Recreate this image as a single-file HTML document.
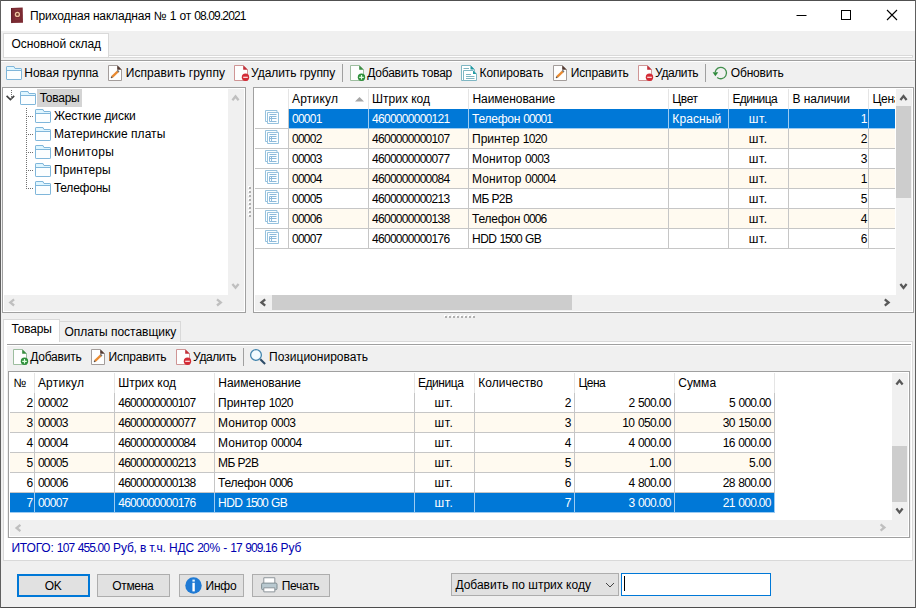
<!DOCTYPE html>
<html lang="ru"><head><meta charset="utf-8"><title>Приходная накладная № 1 от 08.09.2021</title>
<style>
html,body{margin:0;padding:0;background:#f0f0f0;overflow:hidden}
#w{position:relative;width:916px;height:608px;overflow:hidden;font-family:"Liberation Sans", sans-serif;font-size:12px}
#w div,#w svg{position:absolute}
.t{white-space:nowrap;line-height:16px;height:16px}
.d{font-size:12px;letter-spacing:-0.7px;word-spacing:0.9px;margin-right:0.7px}
.i{display:block}
.i svg{position:static!important;display:block}
</style></head><body><div id="w">
<div style="left:0px;top:0px;width:916px;height:608px;background:#f0f0f0;"></div>
<div style="left:1px;top:1px;width:914px;height:30px;background:#fff;"></div>
<div style="left:0px;top:0px;width:916px;height:1px;background:#505050;"></div>
<div style="left:0px;top:607px;width:916px;height:1px;background:#4c4c4c;"></div>
<div style="left:0px;top:0px;width:1px;height:608px;background:#606060;"></div>
<div style="left:915px;top:0px;width:1px;height:608px;background:#606060;"></div>
<div class="i" style="left:10px;top:7px"><svg width="14" height="17" viewBox="0 0 14 17"><path d="M1 1.1L12.7 0.5L13 15.8L1.3 16.1Z" fill="#7b2a32"/><path d="M1.5 1.1L1.8 16.1" stroke="#5e1d24" stroke-width="1"/><circle cx="7.4" cy="7.4" r="2.0" fill="#7a3a2a" stroke="#eec4a0" stroke-width="1.3"/><path d="M4.5 2.8h6M5 12h5" stroke="#9a4a48" stroke-width="0.6"/></svg></div>
<div class="t" style="top:8px;font-size:12px;color:#000;letter-spacing:-0.16px;left:30.1px;">Приходная накладная № <span class="d" style="letter-spacing:-0.86px">1</span> от <span class="d" style="letter-spacing:-0.86px">08.09.2021</span></div>
<svg class="i" style="left:790px;top:4px" width="120" height="24" viewBox="0 0 120 24"><path d="M6.5 11.5h10" stroke="#000" stroke-width="1" fill="none"/><rect x="51.5" y="6.5" width="9" height="9" stroke="#000" stroke-width="1" fill="none"/><path d="M97 6l10 10M107 6l-10 10" stroke="#000" stroke-width="1.1" fill="none"/></svg>
<div style="left:3px;top:55px;width:910px;height:3px;background:#fff;border:1px solid #d9d9d9;box-sizing:border-box;"></div>
<div style="left:3px;top:33px;width:106px;height:24px;background:#fff;border:1px solid #d9d9d9;border-bottom:none;box-sizing:border-box;"></div>
<div class="t" style="top:36px;font-size:12px;color:#000;letter-spacing:-0.07px;left:11.6px;">Основной склад</div>
<div style="left:1px;top:60px;width:914px;height:1px;background:#a0a0a0;"></div>
<div style="left:1px;top:61px;width:914px;height:1px;background:#fff;"></div>
<div class="i" style="left:6px;top:66px"><svg width="16" height="14" viewBox="0 0 16 14"><path d="M1.5 0.5h6.3l1.2 2h5.5q1 0 1 1v9q0 1-1 1h-13q-1 0-1-1v-11q0-1 1-1z" fill="#fbfeff" stroke="#7fb6da" stroke-width="1"/><path d="M1 1h7l1 2h6v1.5h-14z" fill="#dff6ff"/><path d="M0.5 4.5h15" stroke="#7fb6da" stroke-width="1"/><path d="M1.5 0.5h6.3l1.2 2h5.5q1 0 1 1v9q0 1-1 1h-13q-1 0-1-1v-11q0-1 1-1z" fill="none" stroke="#7fb6da" stroke-width="1"/></svg></div>
<div class="t" style="top:65px;font-size:12px;color:#000;letter-spacing:-0.04px;left:24.3px;">Новая группа</div>
<div class="i" style="left:108px;top:65px"><svg width="15" height="16" viewBox="0 0 15 16"><path d="M0.5 0.5h9l4 4v11h-13z" fill="#fefefe" stroke="#a39d9b" stroke-width="1"/><path d="M9.2 0.4l4.5 4.4h-4.5z" fill="#543a32"/><path d="M4.1 11.9L9.9 6.4" stroke="#e98a30" stroke-width="2.3"/><path d="M9.6 6.7l1.1-1.05" stroke="#727272" stroke-width="2.3"/><path d="M3.1 12.9l1.3-0.5l-0.8-0.8z" fill="#3a2a20" stroke="#3a2a20" stroke-width="0.5"/></svg></div>
<div class="t" style="top:65px;font-size:12px;color:#000;letter-spacing:0.04px;left:125.8px;">Исправить группу</div>
<div class="i" style="left:234px;top:65px"><svg width="16" height="17" viewBox="0 0 16 17"><path d="M0.5 0.5h9l4 4v11h-13z" fill="#fefefe" stroke="#cf9595" stroke-width="1"/><path d="M9.2 0.4l4.5 4.4h-4.5z" fill="#c2303a"/><circle cx="11.5" cy="12.3" r="3.7" fill="#d32b36"/><path d="M9.2 12.3h4.6" stroke="#ffe9e9" stroke-width="1.2"/></svg></div>
<div class="t" style="top:65px;font-size:12px;color:#000;letter-spacing:-0.07px;left:251.1px;">Удалить группу</div>
<div style="left:342px;top:64px;width:1px;height:18px;background:#a0a0a0;"></div>
<div class="i" style="left:350px;top:65px"><svg width="16" height="17" viewBox="0 0 16 17"><path d="M0.5 0.5h9l4 4v11h-13z" fill="#fefefe" stroke="#9dbd9f" stroke-width="1"/><path d="M9.2 0.4l4.5 4.4h-4.5z" fill="#3a8d42"/><circle cx="11.5" cy="12.3" r="3.7" fill="#2f8f3c"/><path d="M9.2 12.3h4.6M11.5 10v4.6" stroke="#dfffdf" stroke-width="1.2"/></svg></div>
<div class="t" style="top:65px;font-size:12px;color:#000;letter-spacing:-0.23px;left:367.3px;">Добавить товар</div>
<div class="i" style="left:461px;top:65px"><svg width="17" height="16" viewBox="0 0 17 16"><path d="M0.5 0.5h9l4 4v11h-13z" fill="#fff" stroke="#7fb6c3" stroke-width="1"/><path d="M9.5 0.5l4 4h-4z" fill="#1f9aa2"/><path d="M2.5 3.5h5.5" stroke="#7fb4c0" stroke-width="1"/><path d="M2.5 5.5h9.5l3.5 3.5v6.5h-13z" fill="#fff" stroke="#7fb6c3" stroke-width="1"/><path d="M12 5.5l3.5 3.5h-3.5z" fill="#1f9aa2"/><path d="M5 9.5h5M5 11.5h8.5M5 13.5h8.5" stroke="#7fb4c0" stroke-width="1"/></svg></div>
<div class="t" style="top:65px;font-size:12px;color:#000;letter-spacing:-0.07px;left:479.6px;">Копировать</div>
<div class="i" style="left:553px;top:65px"><svg width="15" height="16" viewBox="0 0 15 16"><path d="M0.5 0.5h9l4 4v11h-13z" fill="#fefefe" stroke="#a39d9b" stroke-width="1"/><path d="M9.2 0.4l4.5 4.4h-4.5z" fill="#543a32"/><path d="M4.1 11.9L9.9 6.4" stroke="#e98a30" stroke-width="2.3"/><path d="M9.6 6.7l1.1-1.05" stroke="#727272" stroke-width="2.3"/><path d="M3.1 12.9l1.3-0.5l-0.8-0.8z" fill="#3a2a20" stroke="#3a2a20" stroke-width="0.5"/></svg></div>
<div class="t" style="top:65px;font-size:12px;color:#000;letter-spacing:-0.17px;left:570.8px;">Исправить</div>
<div class="i" style="left:638px;top:65px"><svg width="16" height="17" viewBox="0 0 16 17"><path d="M0.5 0.5h9l4 4v11h-13z" fill="#fefefe" stroke="#cf9595" stroke-width="1"/><path d="M9.2 0.4l4.5 4.4h-4.5z" fill="#c2303a"/><circle cx="11.5" cy="12.3" r="3.7" fill="#d32b36"/><path d="M9.2 12.3h4.6" stroke="#ffe9e9" stroke-width="1.2"/></svg></div>
<div class="t" style="top:65px;font-size:12px;color:#000;letter-spacing:-0.4px;left:655.1px;">Удалить</div>
<div style="left:705px;top:64px;width:1px;height:18px;background:#a0a0a0;"></div>
<div class="i" style="left:712px;top:65px"><svg width="16" height="16" viewBox="0 0 16 16"><path d="M3.2 7.2A5.7 5.7 0 1 1 5.2 12.4" fill="none" stroke="#418f4c" stroke-width="1.3"/><path d="M0.6 7.2h5.6l-2.8 4z" fill="#2e8a3c"/></svg></div>
<div class="t" style="top:65px;font-size:12px;color:#000;letter-spacing:-0.18px;left:730.8px;">Обновить</div>
<div style="left:2px;top:87px;width:244px;height:226px;background:#fff;border:1px solid #a0a0a0;box-sizing:border-box;"></div>
<div style="left:228px;top:89px;width:16px;height:222px;background:#f0f0f0;"></div>
<div style="left:4px;top:295px;width:240px;height:16px;background:#f0f0f0;"></div>
<div style="left:37px;top:89px;width:45px;height:18px;background:#d4d4d4;"></div>
<div class="i" style="left:5px;top:94px"><svg width="11" height="8" viewBox="0 0 11 8"><path d="M1.6 1.9L5.4 5.6L9.2 1.9" stroke="#404040" stroke-width="1.6" fill="none"/></svg></div>
<div class="i" style="left:20px;top:91px"><svg width="16" height="14" viewBox="0 0 16 14"><path d="M1.5 0.5h6.3l1.2 2h5.5q1 0 1 1v9q0 1-1 1h-13q-1 0-1-1v-11q0-1 1-1z" fill="#fbfeff" stroke="#7fb6da" stroke-width="1"/><path d="M1 1h7l1 2h6v1.5h-14z" fill="#dff6ff"/><path d="M0.5 4.5h15" stroke="#7fb6da" stroke-width="1"/><path d="M1.5 0.5h6.3l1.2 2h5.5q1 0 1 1v9q0 1-1 1h-13q-1 0-1-1v-11q0-1 1-1z" fill="none" stroke="#7fb6da" stroke-width="1"/></svg></div>
<div class="t" style="top:90px;font-size:12px;color:#000;letter-spacing:-0.26px;left:39.7px;">Товары</div>
<div class="i" style="left:35px;top:109px"><svg width="16" height="14" viewBox="0 0 16 14"><path d="M1.5 0.5h6.3l1.2 2h5.5q1 0 1 1v9q0 1-1 1h-13q-1 0-1-1v-11q0-1 1-1z" fill="#fbfeff" stroke="#7fb6da" stroke-width="1"/><path d="M1 1h7l1 2h6v1.5h-14z" fill="#dff6ff"/><path d="M0.5 4.5h15" stroke="#7fb6da" stroke-width="1"/><path d="M1.5 0.5h6.3l1.2 2h5.5q1 0 1 1v9q0 1-1 1h-13q-1 0-1-1v-11q0-1 1-1z" fill="none" stroke="#7fb6da" stroke-width="1"/></svg></div>
<div class="t" style="top:108px;font-size:12px;color:#000;letter-spacing:-0.07px;left:53.9px;">Жесткие диски</div>
<div class="i" style="left:35px;top:127px"><svg width="16" height="14" viewBox="0 0 16 14"><path d="M1.5 0.5h6.3l1.2 2h5.5q1 0 1 1v9q0 1-1 1h-13q-1 0-1-1v-11q0-1 1-1z" fill="#fbfeff" stroke="#7fb6da" stroke-width="1"/><path d="M1 1h7l1 2h6v1.5h-14z" fill="#dff6ff"/><path d="M0.5 4.5h15" stroke="#7fb6da" stroke-width="1"/><path d="M1.5 0.5h6.3l1.2 2h5.5q1 0 1 1v9q0 1-1 1h-13q-1 0-1-1v-11q0-1 1-1z" fill="none" stroke="#7fb6da" stroke-width="1"/></svg></div>
<div class="t" style="top:126px;font-size:12px;color:#000;letter-spacing:0.05px;left:53.9px;">Материнские платы</div>
<div class="i" style="left:35px;top:145px"><svg width="16" height="14" viewBox="0 0 16 14"><path d="M1.5 0.5h6.3l1.2 2h5.5q1 0 1 1v9q0 1-1 1h-13q-1 0-1-1v-11q0-1 1-1z" fill="#fbfeff" stroke="#7fb6da" stroke-width="1"/><path d="M1 1h7l1 2h6v1.5h-14z" fill="#dff6ff"/><path d="M0.5 4.5h15" stroke="#7fb6da" stroke-width="1"/><path d="M1.5 0.5h6.3l1.2 2h5.5q1 0 1 1v9q0 1-1 1h-13q-1 0-1-1v-11q0-1 1-1z" fill="none" stroke="#7fb6da" stroke-width="1"/></svg></div>
<div class="t" style="top:144px;font-size:12px;color:#000;letter-spacing:0.36px;left:53.9px;">Мониторы</div>
<div class="i" style="left:35px;top:163px"><svg width="16" height="14" viewBox="0 0 16 14"><path d="M1.5 0.5h6.3l1.2 2h5.5q1 0 1 1v9q0 1-1 1h-13q-1 0-1-1v-11q0-1 1-1z" fill="#fbfeff" stroke="#7fb6da" stroke-width="1"/><path d="M1 1h7l1 2h6v1.5h-14z" fill="#dff6ff"/><path d="M0.5 4.5h15" stroke="#7fb6da" stroke-width="1"/><path d="M1.5 0.5h6.3l1.2 2h5.5q1 0 1 1v9q0 1-1 1h-13q-1 0-1-1v-11q0-1 1-1z" fill="none" stroke="#7fb6da" stroke-width="1"/></svg></div>
<div class="t" style="top:162px;font-size:12px;color:#000;letter-spacing:0.12px;left:53.9px;">Принтеры</div>
<div class="i" style="left:35px;top:181px"><svg width="16" height="14" viewBox="0 0 16 14"><path d="M1.5 0.5h6.3l1.2 2h5.5q1 0 1 1v9q0 1-1 1h-13q-1 0-1-1v-11q0-1 1-1z" fill="#fbfeff" stroke="#7fb6da" stroke-width="1"/><path d="M1 1h7l1 2h6v1.5h-14z" fill="#dff6ff"/><path d="M0.5 4.5h15" stroke="#7fb6da" stroke-width="1"/><path d="M1.5 0.5h6.3l1.2 2h5.5q1 0 1 1v9q0 1-1 1h-13q-1 0-1-1v-11q0-1 1-1z" fill="none" stroke="#7fb6da" stroke-width="1"/></svg></div>
<div class="t" style="top:180px;font-size:12px;color:#000;letter-spacing:-0.23px;left:53.9px;">Телефоны</div>
<svg class="i" style="left:0;top:0" width="60" height="200" viewBox="0 0 60 200"><g shape-rendering="crispEdges" stroke="#707070" stroke-width="1" stroke-dasharray="1 1" fill="none"><path d="M11.5 90V99"/><path d="M26.5 108V189"/><path d="M26 116.5H34"/><path d="M26 134.5H34"/><path d="M26 152.5H34"/><path d="M26 170.5H34"/><path d="M26 188.5H34"/></g></svg>
<div style="left:248px;top:186px;width:2px;height:2px;background:#fff;"></div>
<div style="left:249px;top:187px;width:2px;height:2px;background:#b0b0b0;"></div>
<div style="left:248px;top:190px;width:2px;height:2px;background:#fff;"></div>
<div style="left:249px;top:191px;width:2px;height:2px;background:#b0b0b0;"></div>
<div style="left:248px;top:194px;width:2px;height:2px;background:#fff;"></div>
<div style="left:249px;top:195px;width:2px;height:2px;background:#b0b0b0;"></div>
<div style="left:248px;top:198px;width:2px;height:2px;background:#fff;"></div>
<div style="left:249px;top:199px;width:2px;height:2px;background:#b0b0b0;"></div>
<div style="left:248px;top:202px;width:2px;height:2px;background:#fff;"></div>
<div style="left:249px;top:203px;width:2px;height:2px;background:#b0b0b0;"></div>
<div style="left:248px;top:206px;width:2px;height:2px;background:#fff;"></div>
<div style="left:249px;top:207px;width:2px;height:2px;background:#b0b0b0;"></div>
<div style="left:248px;top:210px;width:2px;height:2px;background:#fff;"></div>
<div style="left:249px;top:211px;width:2px;height:2px;background:#b0b0b0;"></div>
<div style="left:248px;top:214px;width:2px;height:2px;background:#fff;"></div>
<div style="left:249px;top:215px;width:2px;height:2px;background:#b0b0b0;"></div>
<div style="left:444px;top:315px;width:2px;height:2px;background:#fff;"></div>
<div style="left:445px;top:316px;width:2px;height:2px;background:#b0b0b0;"></div>
<div style="left:448px;top:315px;width:2px;height:2px;background:#fff;"></div>
<div style="left:449px;top:316px;width:2px;height:2px;background:#b0b0b0;"></div>
<div style="left:452px;top:315px;width:2px;height:2px;background:#fff;"></div>
<div style="left:453px;top:316px;width:2px;height:2px;background:#b0b0b0;"></div>
<div style="left:456px;top:315px;width:2px;height:2px;background:#fff;"></div>
<div style="left:457px;top:316px;width:2px;height:2px;background:#b0b0b0;"></div>
<div style="left:460px;top:315px;width:2px;height:2px;background:#fff;"></div>
<div style="left:461px;top:316px;width:2px;height:2px;background:#b0b0b0;"></div>
<div style="left:464px;top:315px;width:2px;height:2px;background:#fff;"></div>
<div style="left:465px;top:316px;width:2px;height:2px;background:#b0b0b0;"></div>
<div style="left:468px;top:315px;width:2px;height:2px;background:#fff;"></div>
<div style="left:469px;top:316px;width:2px;height:2px;background:#b0b0b0;"></div>
<div style="left:472px;top:315px;width:2px;height:2px;background:#fff;"></div>
<div style="left:473px;top:316px;width:2px;height:2px;background:#b0b0b0;"></div>
<div style="left:253px;top:87px;width:661px;height:226px;background:#fff;border:1px solid #a0a0a0;box-sizing:border-box;"></div>
<div style="left:896px;top:89px;width:16px;height:222px;background:#f0f0f0;"></div>
<div style="left:255px;top:295px;width:657px;height:16px;background:#f0f0f0;"></div>
<div style="left:896px;top:106px;width:15px;height:92px;background:#cdcdcd;"></div>
<div style="left:272px;top:295px;width:300px;height:15px;background:#cdcdcd;"></div>
<div style="left:288px;top:89px;width:1px;height:20px;background:#e5e5e5;"></div>
<div style="left:368px;top:89px;width:1px;height:20px;background:#e5e5e5;"></div>
<div style="left:468px;top:89px;width:1px;height:20px;background:#e5e5e5;"></div>
<div style="left:668px;top:89px;width:1px;height:20px;background:#e5e5e5;"></div>
<div style="left:728px;top:89px;width:1px;height:20px;background:#e5e5e5;"></div>
<div style="left:788px;top:89px;width:1px;height:20px;background:#e5e5e5;"></div>
<div style="left:868px;top:89px;width:1px;height:20px;background:#e5e5e5;"></div>
<div class="t" style="top:91px;font-size:12px;color:#000;letter-spacing:0.22px;left:292.0px;">Артикул</div>
<div class="t" style="top:91px;font-size:12px;color:#000;letter-spacing:-0.01px;left:372.1px;">Штрих код</div>
<div class="t" style="top:91px;font-size:12px;color:#000;letter-spacing:-0.04px;left:472.4px;">Наименование</div>
<div class="t" style="top:91px;font-size:12px;color:#000;letter-spacing:-0.36px;left:672.3px;">Цвет</div>
<div class="t" style="top:91px;font-size:12px;color:#000;letter-spacing:-0.53px;left:732.4px;">Единица</div>
<div class="t" style="top:91px;font-size:12px;color:#000;letter-spacing:-0.08px;left:792.5px;">В наличии</div>
<div style="left:868px;top:88px;width:27px;height:20px;overflow:hidden">
<div class="t" style="left:4.4px;top:3px;font-size:12px;letter-spacing:-0.25px">Цена</div></div>
<svg class="i" style="left:355px;top:96px" width="10" height="6" viewBox="0 0 10 6"><path d="M0 5.5L4.5 1L9 5.5Z" fill="#a6a6a6"/></svg>
<div style="left:289px;top:109px;width:606px;height:19px;background:#0078d7;"></div>
<div style="left:255px;top:128px;width:640px;height:1px;background:#c6c6c6;"></div>
<div style="left:288px;top:109px;width:1px;height:20px;background:#c6c6c6;"></div>
<div style="left:368px;top:109px;width:1px;height:20px;background:#c6c6c6;"></div>
<div style="left:468px;top:109px;width:1px;height:20px;background:#c6c6c6;"></div>
<div style="left:668px;top:109px;width:1px;height:20px;background:#c6c6c6;"></div>
<div style="left:728px;top:109px;width:1px;height:20px;background:#c6c6c6;"></div>
<div style="left:788px;top:109px;width:1px;height:20px;background:#c6c6c6;"></div>
<div style="left:868px;top:109px;width:1px;height:20px;background:#c6c6c6;"></div>
<div style="left:289px;top:128px;width:606px;height:1px;background:#9ccbf2;"></div>
<div style="left:368px;top:109px;width:1px;height:19px;background:#9ccbf2;"></div>
<div style="left:468px;top:109px;width:1px;height:19px;background:#9ccbf2;"></div>
<div style="left:668px;top:109px;width:1px;height:19px;background:#9ccbf2;"></div>
<div style="left:728px;top:109px;width:1px;height:19px;background:#9ccbf2;"></div>
<div style="left:788px;top:109px;width:1px;height:19px;background:#9ccbf2;"></div>
<div style="left:868px;top:109px;width:1px;height:19px;background:#9ccbf2;"></div>
<div class="i" style="left:265px;top:110px"><svg width="15" height="15" viewBox="0 0 15 15"><path d="M0.5 0.5h11.5v11h-11.5z" fill="#fbfeff" stroke="#97c2de" stroke-width="1"/><path d="M2.5 2.5h11v11h-11z" fill="#fbfeff" stroke="#97c2de" stroke-width="1"/><path d="M4.5 4.5h7M4.5 6.5h7M4.5 8.5h7M4.5 11.5h7M4.5 6.5v5M6.5 6.5v5" stroke="#8dbadb" stroke-width="1" fill="none"/></svg></div>
<div class="t" style="top:111px;font-size:12px;color:#fff;letter-spacing:-0.04px;left:292.0px;"><span class="d" style="letter-spacing:-0.74px">00001</span></div>
<div class="t" style="top:111px;font-size:12px;color:#fff;letter-spacing:-0.03px;left:372.1px;"><span class="d" style="letter-spacing:-0.73px">4600000000121</span></div>
<div class="t" style="top:111px;font-size:12px;color:#fff;letter-spacing:-0.23px;left:472.0px;">Телефон <span class="d" style="letter-spacing:-0.93px">00001</span></div>
<div class="t" style="top:111px;font-size:12px;color:#fff;letter-spacing:0.12px;left:672.3px;">Красный</div>
<div class="t" style="top:111px;font-size:12px;color:#fff;letter-spacing:0.58px;left:658.29px;width:200px;text-align:center;">шт.</div>
<div class="t" style="top:111px;font-size:12px;color:#fff;right:48.6px;text-align:right;"><span class="d">1</span></div>
<div style="left:289px;top:129px;width:606px;height:19px;background:#fffaf0;"></div>
<div style="left:255px;top:148px;width:640px;height:1px;background:#c6c6c6;"></div>
<div style="left:288px;top:129px;width:1px;height:20px;background:#c6c6c6;"></div>
<div style="left:368px;top:129px;width:1px;height:20px;background:#c6c6c6;"></div>
<div style="left:468px;top:129px;width:1px;height:20px;background:#c6c6c6;"></div>
<div style="left:668px;top:129px;width:1px;height:20px;background:#c6c6c6;"></div>
<div style="left:728px;top:129px;width:1px;height:20px;background:#c6c6c6;"></div>
<div style="left:788px;top:129px;width:1px;height:20px;background:#c6c6c6;"></div>
<div style="left:868px;top:129px;width:1px;height:20px;background:#c6c6c6;"></div>
<div class="i" style="left:265px;top:130px"><svg width="15" height="15" viewBox="0 0 15 15"><path d="M0.5 0.5h11.5v11h-11.5z" fill="#fbfeff" stroke="#97c2de" stroke-width="1"/><path d="M2.5 2.5h11v11h-11z" fill="#fbfeff" stroke="#97c2de" stroke-width="1"/><path d="M4.5 4.5h7M4.5 6.5h7M4.5 8.5h7M4.5 11.5h7M4.5 6.5v5M6.5 6.5v5" stroke="#8dbadb" stroke-width="1" fill="none"/></svg></div>
<div class="t" style="top:131px;font-size:12px;color:#000;letter-spacing:-0.04px;left:292.0px;"><span class="d" style="letter-spacing:-0.74px">00002</span></div>
<div class="t" style="top:131px;font-size:12px;color:#000;letter-spacing:-0.03px;left:372.1px;"><span class="d" style="letter-spacing:-0.73px">4600000000107</span></div>
<div class="t" style="top:131px;font-size:12px;color:#000;letter-spacing:0.01px;left:472.0px;">Принтер <span class="d" style="letter-spacing:-0.69px">1020</span></div>
<div class="t" style="top:131px;font-size:12px;color:#000;letter-spacing:0.58px;left:658.29px;width:200px;text-align:center;">шт.</div>
<div class="t" style="top:131px;font-size:12px;color:#000;right:48.6px;text-align:right;"><span class="d">2</span></div>
<div style="left:255px;top:168px;width:640px;height:1px;background:#c6c6c6;"></div>
<div style="left:288px;top:149px;width:1px;height:20px;background:#c6c6c6;"></div>
<div style="left:368px;top:149px;width:1px;height:20px;background:#c6c6c6;"></div>
<div style="left:468px;top:149px;width:1px;height:20px;background:#c6c6c6;"></div>
<div style="left:668px;top:149px;width:1px;height:20px;background:#c6c6c6;"></div>
<div style="left:728px;top:149px;width:1px;height:20px;background:#c6c6c6;"></div>
<div style="left:788px;top:149px;width:1px;height:20px;background:#c6c6c6;"></div>
<div style="left:868px;top:149px;width:1px;height:20px;background:#c6c6c6;"></div>
<div class="i" style="left:265px;top:150px"><svg width="15" height="15" viewBox="0 0 15 15"><path d="M0.5 0.5h11.5v11h-11.5z" fill="#fbfeff" stroke="#97c2de" stroke-width="1"/><path d="M2.5 2.5h11v11h-11z" fill="#fbfeff" stroke="#97c2de" stroke-width="1"/><path d="M4.5 4.5h7M4.5 6.5h7M4.5 8.5h7M4.5 11.5h7M4.5 6.5v5M6.5 6.5v5" stroke="#8dbadb" stroke-width="1" fill="none"/></svg></div>
<div class="t" style="top:151px;font-size:12px;color:#000;letter-spacing:-0.04px;left:292.0px;"><span class="d" style="letter-spacing:-0.74px">00003</span></div>
<div class="t" style="top:151px;font-size:12px;color:#000;letter-spacing:-0.03px;left:372.1px;"><span class="d" style="letter-spacing:-0.73px">4600000000077</span></div>
<div class="t" style="top:151px;font-size:12px;color:#000;letter-spacing:0.1px;left:472.0px;">Монитор <span class="d" style="letter-spacing:-0.6px">0003</span></div>
<div class="t" style="top:151px;font-size:12px;color:#000;letter-spacing:0.58px;left:658.29px;width:200px;text-align:center;">шт.</div>
<div class="t" style="top:151px;font-size:12px;color:#000;right:48.6px;text-align:right;"><span class="d">3</span></div>
<div style="left:289px;top:169px;width:606px;height:19px;background:#fffaf0;"></div>
<div style="left:255px;top:188px;width:640px;height:1px;background:#c6c6c6;"></div>
<div style="left:288px;top:169px;width:1px;height:20px;background:#c6c6c6;"></div>
<div style="left:368px;top:169px;width:1px;height:20px;background:#c6c6c6;"></div>
<div style="left:468px;top:169px;width:1px;height:20px;background:#c6c6c6;"></div>
<div style="left:668px;top:169px;width:1px;height:20px;background:#c6c6c6;"></div>
<div style="left:728px;top:169px;width:1px;height:20px;background:#c6c6c6;"></div>
<div style="left:788px;top:169px;width:1px;height:20px;background:#c6c6c6;"></div>
<div style="left:868px;top:169px;width:1px;height:20px;background:#c6c6c6;"></div>
<div class="i" style="left:265px;top:170px"><svg width="15" height="15" viewBox="0 0 15 15"><path d="M0.5 0.5h11.5v11h-11.5z" fill="#fbfeff" stroke="#97c2de" stroke-width="1"/><path d="M2.5 2.5h11v11h-11z" fill="#fbfeff" stroke="#97c2de" stroke-width="1"/><path d="M4.5 4.5h7M4.5 6.5h7M4.5 8.5h7M4.5 11.5h7M4.5 6.5v5M6.5 6.5v5" stroke="#8dbadb" stroke-width="1" fill="none"/></svg></div>
<div class="t" style="top:171px;font-size:12px;color:#000;letter-spacing:-0.04px;left:292.0px;"><span class="d" style="letter-spacing:-0.74px">00004</span></div>
<div class="t" style="top:171px;font-size:12px;color:#000;letter-spacing:-0.03px;left:372.1px;"><span class="d" style="letter-spacing:-0.73px">4600000000084</span></div>
<div class="t" style="top:171px;font-size:12px;color:#000;letter-spacing:0.11px;left:472.0px;">Монитор <span class="d" style="letter-spacing:-0.59px">00004</span></div>
<div class="t" style="top:171px;font-size:12px;color:#000;letter-spacing:0.58px;left:658.29px;width:200px;text-align:center;">шт.</div>
<div class="t" style="top:171px;font-size:12px;color:#000;right:48.6px;text-align:right;"><span class="d">1</span></div>
<div style="left:255px;top:208px;width:640px;height:1px;background:#c6c6c6;"></div>
<div style="left:288px;top:189px;width:1px;height:20px;background:#c6c6c6;"></div>
<div style="left:368px;top:189px;width:1px;height:20px;background:#c6c6c6;"></div>
<div style="left:468px;top:189px;width:1px;height:20px;background:#c6c6c6;"></div>
<div style="left:668px;top:189px;width:1px;height:20px;background:#c6c6c6;"></div>
<div style="left:728px;top:189px;width:1px;height:20px;background:#c6c6c6;"></div>
<div style="left:788px;top:189px;width:1px;height:20px;background:#c6c6c6;"></div>
<div style="left:868px;top:189px;width:1px;height:20px;background:#c6c6c6;"></div>
<div class="i" style="left:265px;top:190px"><svg width="15" height="15" viewBox="0 0 15 15"><path d="M0.5 0.5h11.5v11h-11.5z" fill="#fbfeff" stroke="#97c2de" stroke-width="1"/><path d="M2.5 2.5h11v11h-11z" fill="#fbfeff" stroke="#97c2de" stroke-width="1"/><path d="M4.5 4.5h7M4.5 6.5h7M4.5 8.5h7M4.5 11.5h7M4.5 6.5v5M6.5 6.5v5" stroke="#8dbadb" stroke-width="1" fill="none"/></svg></div>
<div class="t" style="top:191px;font-size:12px;color:#000;letter-spacing:-0.04px;left:292.0px;"><span class="d" style="letter-spacing:-0.74px">00005</span></div>
<div class="t" style="top:191px;font-size:12px;color:#000;letter-spacing:-0.03px;left:372.1px;"><span class="d" style="letter-spacing:-0.73px">4600000000213</span></div>
<div class="t" style="top:191px;font-size:12px;color:#000;letter-spacing:-0.6px;left:472.0px;">МБ P2B</div>
<div class="t" style="top:191px;font-size:12px;color:#000;letter-spacing:0.58px;left:658.29px;width:200px;text-align:center;">шт.</div>
<div class="t" style="top:191px;font-size:12px;color:#000;right:48.6px;text-align:right;"><span class="d">5</span></div>
<div style="left:289px;top:209px;width:606px;height:19px;background:#fffaf0;"></div>
<div style="left:255px;top:228px;width:640px;height:1px;background:#c6c6c6;"></div>
<div style="left:288px;top:209px;width:1px;height:20px;background:#c6c6c6;"></div>
<div style="left:368px;top:209px;width:1px;height:20px;background:#c6c6c6;"></div>
<div style="left:468px;top:209px;width:1px;height:20px;background:#c6c6c6;"></div>
<div style="left:668px;top:209px;width:1px;height:20px;background:#c6c6c6;"></div>
<div style="left:728px;top:209px;width:1px;height:20px;background:#c6c6c6;"></div>
<div style="left:788px;top:209px;width:1px;height:20px;background:#c6c6c6;"></div>
<div style="left:868px;top:209px;width:1px;height:20px;background:#c6c6c6;"></div>
<div class="i" style="left:265px;top:210px"><svg width="15" height="15" viewBox="0 0 15 15"><path d="M0.5 0.5h11.5v11h-11.5z" fill="#fbfeff" stroke="#97c2de" stroke-width="1"/><path d="M2.5 2.5h11v11h-11z" fill="#fbfeff" stroke="#97c2de" stroke-width="1"/><path d="M4.5 4.5h7M4.5 6.5h7M4.5 8.5h7M4.5 11.5h7M4.5 6.5v5M6.5 6.5v5" stroke="#8dbadb" stroke-width="1" fill="none"/></svg></div>
<div class="t" style="top:211px;font-size:12px;color:#000;letter-spacing:-0.04px;left:292.0px;"><span class="d" style="letter-spacing:-0.74px">00006</span></div>
<div class="t" style="top:211px;font-size:12px;color:#000;letter-spacing:-0.03px;left:372.1px;"><span class="d" style="letter-spacing:-0.73px">4600000000138</span></div>
<div class="t" style="top:211px;font-size:12px;color:#000;letter-spacing:-0.23px;left:472.0px;">Телефон <span class="d" style="letter-spacing:-0.93px">0006</span></div>
<div class="t" style="top:211px;font-size:12px;color:#000;letter-spacing:0.58px;left:658.29px;width:200px;text-align:center;">шт.</div>
<div class="t" style="top:211px;font-size:12px;color:#000;right:48.6px;text-align:right;"><span class="d">4</span></div>
<div style="left:255px;top:248px;width:640px;height:1px;background:#c6c6c6;"></div>
<div style="left:288px;top:229px;width:1px;height:20px;background:#c6c6c6;"></div>
<div style="left:368px;top:229px;width:1px;height:20px;background:#c6c6c6;"></div>
<div style="left:468px;top:229px;width:1px;height:20px;background:#c6c6c6;"></div>
<div style="left:668px;top:229px;width:1px;height:20px;background:#c6c6c6;"></div>
<div style="left:728px;top:229px;width:1px;height:20px;background:#c6c6c6;"></div>
<div style="left:788px;top:229px;width:1px;height:20px;background:#c6c6c6;"></div>
<div style="left:868px;top:229px;width:1px;height:20px;background:#c6c6c6;"></div>
<div class="i" style="left:265px;top:230px"><svg width="15" height="15" viewBox="0 0 15 15"><path d="M0.5 0.5h11.5v11h-11.5z" fill="#fbfeff" stroke="#97c2de" stroke-width="1"/><path d="M2.5 2.5h11v11h-11z" fill="#fbfeff" stroke="#97c2de" stroke-width="1"/><path d="M4.5 4.5h7M4.5 6.5h7M4.5 8.5h7M4.5 11.5h7M4.5 6.5v5M6.5 6.5v5" stroke="#8dbadb" stroke-width="1" fill="none"/></svg></div>
<div class="t" style="top:231px;font-size:12px;color:#000;letter-spacing:-0.04px;left:292.0px;"><span class="d" style="letter-spacing:-0.74px">00007</span></div>
<div class="t" style="top:231px;font-size:12px;color:#000;letter-spacing:-0.03px;left:372.1px;"><span class="d" style="letter-spacing:-0.73px">4600000000176</span></div>
<div class="t" style="top:231px;font-size:12px;color:#000;letter-spacing:-0.48px;left:472.0px;">HDD <span class="d" style="letter-spacing:-1.18px">1500</span> GB</div>
<div class="t" style="top:231px;font-size:12px;color:#000;letter-spacing:0.58px;left:658.29px;width:200px;text-align:center;">шт.</div>
<div class="t" style="top:231px;font-size:12px;color:#000;right:48.6px;text-align:right;"><span class="d">6</span></div>
<div style="left:3px;top:341px;width:910px;height:220px;background:#fff;border:1px solid #d9d9d9;box-sizing:border-box;"></div>
<div style="left:59px;top:321px;width:122px;height:21px;background:#f0f0f0;border:1px solid #d9d9d9;box-sizing:border-box;border-bottom:none;"></div>
<div style="left:3px;top:319px;width:57px;height:23px;background:#fff;border:1px solid #d9d9d9;box-sizing:border-box;border-bottom:none;"></div>
<div style="left:7px;top:344px;width:904px;height:194px;background:#f0f0f0;"></div>
<div class="t" style="top:321px;font-size:12px;color:#000;letter-spacing:-0.18px;left:11.5px;">Товары</div>
<div class="t" style="top:324px;font-size:12px;color:#000;letter-spacing:-0.03px;left:64.5px;">Оплаты поставщику</div>
<div style="left:7px;top:344px;width:904px;height:1px;background:#a0a0a0;"></div>
<div style="left:7px;top:345px;width:904px;height:1px;background:#fff;"></div>
<div class="i" style="left:13px;top:349px"><svg width="16" height="17" viewBox="0 0 16 17"><path d="M0.5 0.5h9l4 4v11h-13z" fill="#fefefe" stroke="#9dbd9f" stroke-width="1"/><path d="M9.2 0.4l4.5 4.4h-4.5z" fill="#3a8d42"/><circle cx="11.5" cy="12.3" r="3.7" fill="#2f8f3c"/><path d="M9.2 12.3h4.6M11.5 10v4.6" stroke="#dfffdf" stroke-width="1.2"/></svg></div>
<div class="t" style="top:349px;font-size:12px;color:#000;letter-spacing:-0.21px;left:30.2px;">Добавить</div>
<div class="i" style="left:91px;top:349px"><svg width="15" height="16" viewBox="0 0 15 16"><path d="M0.5 0.5h9l4 4v11h-13z" fill="#fefefe" stroke="#a39d9b" stroke-width="1"/><path d="M9.2 0.4l4.5 4.4h-4.5z" fill="#543a32"/><path d="M4.1 11.9L9.9 6.4" stroke="#e98a30" stroke-width="2.3"/><path d="M9.6 6.7l1.1-1.05" stroke="#727272" stroke-width="2.3"/><path d="M3.1 12.9l1.3-0.5l-0.8-0.8z" fill="#3a2a20" stroke="#3a2a20" stroke-width="0.5"/></svg></div>
<div class="t" style="top:349px;font-size:12px;color:#000;letter-spacing:-0.17px;left:108.6px;">Исправить</div>
<div class="i" style="left:176px;top:349px"><svg width="16" height="17" viewBox="0 0 16 17"><path d="M0.5 0.5h9l4 4v11h-13z" fill="#fefefe" stroke="#cf9595" stroke-width="1"/><path d="M9.2 0.4l4.5 4.4h-4.5z" fill="#c2303a"/><circle cx="11.5" cy="12.3" r="3.7" fill="#d32b36"/><path d="M9.2 12.3h4.6" stroke="#ffe9e9" stroke-width="1.2"/></svg></div>
<div class="t" style="top:349px;font-size:12px;color:#000;letter-spacing:-0.4px;left:193.1px;">Удалить</div>
<div style="left:243px;top:348px;width:1px;height:18px;background:#a0a0a0;"></div>
<div class="i" style="left:249px;top:348px"><svg width="18" height="18" viewBox="0 0 18 18"><circle cx="7" cy="7" r="5.4" fill="#f3fcff" stroke="#4586ae" stroke-width="1.3"/><path d="M11.3 11.2l4.8 4.8" stroke="#2d4c68" stroke-width="2.1"/></svg></div>
<div class="t" style="top:349px;font-size:12px;color:#000;letter-spacing:0.01px;left:269.1px;">Позиционировать</div>
<div style="left:8px;top:371px;width:902px;height:167px;background:#fff;border:1px solid #a0a0a0;box-sizing:border-box;"></div>
<div style="left:892px;top:373px;width:16px;height:163px;background:#f0f0f0;"></div>
<div style="left:10px;top:520px;width:898px;height:16px;background:#f0f0f0;"></div>
<div style="left:892px;top:446px;width:15px;height:56px;background:#cdcdcd;"></div>
<div style="left:34px;top:373px;width:1px;height:20px;background:#e5e5e5;"></div>
<div style="left:114px;top:373px;width:1px;height:20px;background:#e5e5e5;"></div>
<div style="left:214px;top:373px;width:1px;height:20px;background:#e5e5e5;"></div>
<div style="left:414px;top:373px;width:1px;height:20px;background:#e5e5e5;"></div>
<div style="left:474px;top:373px;width:1px;height:20px;background:#e5e5e5;"></div>
<div style="left:574px;top:373px;width:1px;height:20px;background:#e5e5e5;"></div>
<div style="left:674px;top:373px;width:1px;height:20px;background:#e5e5e5;"></div>
<div style="left:774px;top:373px;width:1px;height:20px;background:#e5e5e5;"></div>
<div class="t" style="top:375px;font-size:12px;color:#000;left:13.5px;">№</div>
<div class="t" style="top:375px;font-size:12px;color:#000;letter-spacing:0.22px;left:37.9px;">Артикул</div>
<div class="t" style="top:375px;font-size:12px;color:#000;letter-spacing:-0.01px;left:118.2px;">Штрих код</div>
<div class="t" style="top:375px;font-size:12px;color:#000;letter-spacing:-0.04px;left:218.3px;">Наименование</div>
<div class="t" style="top:375px;font-size:12px;color:#000;letter-spacing:-0.45px;left:418.0px;">Единица</div>
<div class="t" style="top:375px;font-size:12px;color:#000;letter-spacing:0.03px;left:478.3px;">Количество</div>
<div class="t" style="top:375px;font-size:12px;color:#000;letter-spacing:-0.52px;left:578.5px;">Цена</div>
<div class="t" style="top:375px;font-size:12px;color:#000;letter-spacing:0.05px;left:678.2px;">Сумма</div>
<div style="left:10px;top:412px;width:765px;height:1px;background:#c6c6c6;"></div>
<div style="left:34px;top:393px;width:1px;height:20px;background:#c6c6c6;"></div>
<div style="left:114px;top:393px;width:1px;height:20px;background:#c6c6c6;"></div>
<div style="left:214px;top:393px;width:1px;height:20px;background:#c6c6c6;"></div>
<div style="left:414px;top:393px;width:1px;height:20px;background:#c6c6c6;"></div>
<div style="left:474px;top:393px;width:1px;height:20px;background:#c6c6c6;"></div>
<div style="left:574px;top:393px;width:1px;height:20px;background:#c6c6c6;"></div>
<div style="left:674px;top:393px;width:1px;height:20px;background:#c6c6c6;"></div>
<div style="left:774px;top:393px;width:1px;height:20px;background:#c6c6c6;"></div>
<div class="t" style="top:395px;font-size:12px;color:#000;right:882.8px;text-align:right;"><span class="d">2</span></div>
<div class="t" style="top:395px;font-size:12px;color:#000;letter-spacing:-0.04px;left:37.9px;"><span class="d" style="letter-spacing:-0.74px">00002</span></div>
<div class="t" style="top:395px;font-size:12px;color:#000;letter-spacing:-0.03px;left:118.2px;"><span class="d" style="letter-spacing:-0.73px">4600000000107</span></div>
<div class="t" style="top:395px;font-size:12px;color:#000;letter-spacing:0.01px;left:218.0px;">Принтер <span class="d" style="letter-spacing:-0.69px">1020</span></div>
<div class="t" style="top:395px;font-size:12px;color:#000;letter-spacing:0.58px;left:343.99px;width:200px;text-align:center;">шт.</div>
<div class="t" style="top:395px;font-size:12px;color:#000;right:344.7px;text-align:right;"><span class="d">2</span></div>
<div class="t" style="top:395px;font-size:12px;color:#000;right:244.7px;text-align:right;"><span class="d">2 500.00</span></div>
<div class="t" style="top:395px;font-size:12px;color:#000;letter-spacing:-0.04px;right:144.54px;text-align:right;"><span class="d" style="letter-spacing:-0.74px">5 000.00</span></div>
<div style="left:10px;top:413px;width:765px;height:19px;background:#fffaf0;"></div>
<div style="left:10px;top:432px;width:765px;height:1px;background:#c6c6c6;"></div>
<div style="left:34px;top:413px;width:1px;height:20px;background:#c6c6c6;"></div>
<div style="left:114px;top:413px;width:1px;height:20px;background:#c6c6c6;"></div>
<div style="left:214px;top:413px;width:1px;height:20px;background:#c6c6c6;"></div>
<div style="left:414px;top:413px;width:1px;height:20px;background:#c6c6c6;"></div>
<div style="left:474px;top:413px;width:1px;height:20px;background:#c6c6c6;"></div>
<div style="left:574px;top:413px;width:1px;height:20px;background:#c6c6c6;"></div>
<div style="left:674px;top:413px;width:1px;height:20px;background:#c6c6c6;"></div>
<div style="left:774px;top:413px;width:1px;height:20px;background:#c6c6c6;"></div>
<div class="t" style="top:415px;font-size:12px;color:#000;right:882.8px;text-align:right;"><span class="d">3</span></div>
<div class="t" style="top:415px;font-size:12px;color:#000;letter-spacing:-0.04px;left:37.9px;"><span class="d" style="letter-spacing:-0.74px">00003</span></div>
<div class="t" style="top:415px;font-size:12px;color:#000;letter-spacing:-0.03px;left:118.2px;"><span class="d" style="letter-spacing:-0.73px">4600000000077</span></div>
<div class="t" style="top:415px;font-size:12px;color:#000;letter-spacing:0.1px;left:218.0px;">Монитор <span class="d" style="letter-spacing:-0.6px">0003</span></div>
<div class="t" style="top:415px;font-size:12px;color:#000;letter-spacing:0.58px;left:343.99px;width:200px;text-align:center;">шт.</div>
<div class="t" style="top:415px;font-size:12px;color:#000;right:344.7px;text-align:right;"><span class="d">3</span></div>
<div class="t" style="top:415px;font-size:12px;color:#000;letter-spacing:0.04px;right:244.66px;text-align:right;"><span class="d" style="letter-spacing:-0.66px">10 050.00</span></div>
<div class="t" style="top:415px;font-size:12px;color:#000;right:144.5px;text-align:right;"><span class="d">30 150.00</span></div>
<div style="left:10px;top:452px;width:765px;height:1px;background:#c6c6c6;"></div>
<div style="left:34px;top:433px;width:1px;height:20px;background:#c6c6c6;"></div>
<div style="left:114px;top:433px;width:1px;height:20px;background:#c6c6c6;"></div>
<div style="left:214px;top:433px;width:1px;height:20px;background:#c6c6c6;"></div>
<div style="left:414px;top:433px;width:1px;height:20px;background:#c6c6c6;"></div>
<div style="left:474px;top:433px;width:1px;height:20px;background:#c6c6c6;"></div>
<div style="left:574px;top:433px;width:1px;height:20px;background:#c6c6c6;"></div>
<div style="left:674px;top:433px;width:1px;height:20px;background:#c6c6c6;"></div>
<div style="left:774px;top:433px;width:1px;height:20px;background:#c6c6c6;"></div>
<div class="t" style="top:435px;font-size:12px;color:#000;right:882.8px;text-align:right;"><span class="d">4</span></div>
<div class="t" style="top:435px;font-size:12px;color:#000;letter-spacing:-0.04px;left:37.9px;"><span class="d" style="letter-spacing:-0.74px">00004</span></div>
<div class="t" style="top:435px;font-size:12px;color:#000;letter-spacing:-0.03px;left:118.2px;"><span class="d" style="letter-spacing:-0.73px">4600000000084</span></div>
<div class="t" style="top:435px;font-size:12px;color:#000;letter-spacing:0.11px;left:218.0px;">Монитор <span class="d" style="letter-spacing:-0.59px">00004</span></div>
<div class="t" style="top:435px;font-size:12px;color:#000;letter-spacing:0.58px;left:343.99px;width:200px;text-align:center;">шт.</div>
<div class="t" style="top:435px;font-size:12px;color:#000;right:344.7px;text-align:right;"><span class="d">4</span></div>
<div class="t" style="top:435px;font-size:12px;color:#000;right:244.7px;text-align:right;"><span class="d">4 000.00</span></div>
<div class="t" style="top:435px;font-size:12px;color:#000;right:144.5px;text-align:right;"><span class="d">16 000.00</span></div>
<div style="left:10px;top:453px;width:765px;height:19px;background:#fffaf0;"></div>
<div style="left:10px;top:472px;width:765px;height:1px;background:#c6c6c6;"></div>
<div style="left:34px;top:453px;width:1px;height:20px;background:#c6c6c6;"></div>
<div style="left:114px;top:453px;width:1px;height:20px;background:#c6c6c6;"></div>
<div style="left:214px;top:453px;width:1px;height:20px;background:#c6c6c6;"></div>
<div style="left:414px;top:453px;width:1px;height:20px;background:#c6c6c6;"></div>
<div style="left:474px;top:453px;width:1px;height:20px;background:#c6c6c6;"></div>
<div style="left:574px;top:453px;width:1px;height:20px;background:#c6c6c6;"></div>
<div style="left:674px;top:453px;width:1px;height:20px;background:#c6c6c6;"></div>
<div style="left:774px;top:453px;width:1px;height:20px;background:#c6c6c6;"></div>
<div class="t" style="top:455px;font-size:12px;color:#000;right:882.8px;text-align:right;"><span class="d">5</span></div>
<div class="t" style="top:455px;font-size:12px;color:#000;letter-spacing:-0.04px;left:37.9px;"><span class="d" style="letter-spacing:-0.74px">00005</span></div>
<div class="t" style="top:455px;font-size:12px;color:#000;letter-spacing:-0.03px;left:118.2px;"><span class="d" style="letter-spacing:-0.73px">4600000000213</span></div>
<div class="t" style="top:455px;font-size:12px;color:#000;letter-spacing:-0.6px;left:218.0px;">МБ P2B</div>
<div class="t" style="top:455px;font-size:12px;color:#000;letter-spacing:0.58px;left:343.99px;width:200px;text-align:center;">шт.</div>
<div class="t" style="top:455px;font-size:12px;color:#000;right:344.7px;text-align:right;"><span class="d">5</span></div>
<div class="t" style="top:455px;font-size:12px;color:#000;letter-spacing:0.25px;right:244.45px;text-align:right;"><span class="d" style="letter-spacing:-0.45px">1.00</span></div>
<div class="t" style="top:455px;font-size:12px;color:#000;letter-spacing:0.42px;right:144.08px;text-align:right;"><span class="d" style="letter-spacing:-0.28px">5.00</span></div>
<div style="left:10px;top:492px;width:765px;height:1px;background:#c6c6c6;"></div>
<div style="left:34px;top:473px;width:1px;height:20px;background:#c6c6c6;"></div>
<div style="left:114px;top:473px;width:1px;height:20px;background:#c6c6c6;"></div>
<div style="left:214px;top:473px;width:1px;height:20px;background:#c6c6c6;"></div>
<div style="left:414px;top:473px;width:1px;height:20px;background:#c6c6c6;"></div>
<div style="left:474px;top:473px;width:1px;height:20px;background:#c6c6c6;"></div>
<div style="left:574px;top:473px;width:1px;height:20px;background:#c6c6c6;"></div>
<div style="left:674px;top:473px;width:1px;height:20px;background:#c6c6c6;"></div>
<div style="left:774px;top:473px;width:1px;height:20px;background:#c6c6c6;"></div>
<div class="t" style="top:475px;font-size:12px;color:#000;right:882.8px;text-align:right;"><span class="d">6</span></div>
<div class="t" style="top:475px;font-size:12px;color:#000;letter-spacing:-0.04px;left:37.9px;"><span class="d" style="letter-spacing:-0.74px">00006</span></div>
<div class="t" style="top:475px;font-size:12px;color:#000;letter-spacing:-0.03px;left:118.2px;"><span class="d" style="letter-spacing:-0.73px">4600000000138</span></div>
<div class="t" style="top:475px;font-size:12px;color:#000;letter-spacing:-0.23px;left:218.0px;">Телефон <span class="d" style="letter-spacing:-0.93px">0006</span></div>
<div class="t" style="top:475px;font-size:12px;color:#000;letter-spacing:0.58px;left:343.99px;width:200px;text-align:center;">шт.</div>
<div class="t" style="top:475px;font-size:12px;color:#000;right:344.7px;text-align:right;"><span class="d">6</span></div>
<div class="t" style="top:475px;font-size:12px;color:#000;right:244.7px;text-align:right;"><span class="d">4 800.00</span></div>
<div class="t" style="top:475px;font-size:12px;color:#000;right:144.5px;text-align:right;"><span class="d">28 800.00</span></div>
<div style="left:10px;top:493px;width:765px;height:19px;background:#0078d7;"></div>
<div style="left:10px;top:512px;width:765px;height:1px;background:#c6c6c6;"></div>
<div style="left:34px;top:493px;width:1px;height:20px;background:#c6c6c6;"></div>
<div style="left:114px;top:493px;width:1px;height:20px;background:#c6c6c6;"></div>
<div style="left:214px;top:493px;width:1px;height:20px;background:#c6c6c6;"></div>
<div style="left:414px;top:493px;width:1px;height:20px;background:#c6c6c6;"></div>
<div style="left:474px;top:493px;width:1px;height:20px;background:#c6c6c6;"></div>
<div style="left:574px;top:493px;width:1px;height:20px;background:#c6c6c6;"></div>
<div style="left:674px;top:493px;width:1px;height:20px;background:#c6c6c6;"></div>
<div style="left:774px;top:493px;width:1px;height:20px;background:#c6c6c6;"></div>
<div style="left:10px;top:512px;width:765px;height:1px;background:#9ccbf2;"></div>
<div style="left:34px;top:493px;width:1px;height:19px;background:#9ccbf2;"></div>
<div style="left:114px;top:493px;width:1px;height:19px;background:#9ccbf2;"></div>
<div style="left:214px;top:493px;width:1px;height:19px;background:#9ccbf2;"></div>
<div style="left:414px;top:493px;width:1px;height:19px;background:#9ccbf2;"></div>
<div style="left:474px;top:493px;width:1px;height:19px;background:#9ccbf2;"></div>
<div style="left:574px;top:493px;width:1px;height:19px;background:#9ccbf2;"></div>
<div style="left:674px;top:493px;width:1px;height:19px;background:#9ccbf2;"></div>
<div style="left:774px;top:493px;width:1px;height:19px;background:#9ccbf2;"></div>
<div class="t" style="top:495px;font-size:12px;color:#fff;right:882.8px;text-align:right;"><span class="d">7</span></div>
<div class="t" style="top:495px;font-size:12px;color:#fff;letter-spacing:-0.04px;left:37.9px;"><span class="d" style="letter-spacing:-0.74px">00007</span></div>
<div class="t" style="top:495px;font-size:12px;color:#fff;letter-spacing:-0.03px;left:118.2px;"><span class="d" style="letter-spacing:-0.73px">4600000000176</span></div>
<div class="t" style="top:495px;font-size:12px;color:#fff;letter-spacing:-0.48px;left:218.0px;">HDD <span class="d" style="letter-spacing:-1.18px">1500</span> GB</div>
<div class="t" style="top:495px;font-size:12px;color:#fff;letter-spacing:0.58px;left:343.99px;width:200px;text-align:center;">шт.</div>
<div class="t" style="top:495px;font-size:12px;color:#fff;right:344.7px;text-align:right;"><span class="d">7</span></div>
<div class="t" style="top:495px;font-size:12px;color:#fff;right:244.7px;text-align:right;"><span class="d">3 000.00</span></div>
<div class="t" style="top:495px;font-size:12px;color:#fff;right:144.5px;text-align:right;"><span class="d">21 000.00</span></div>
<div class="t" style="top:540px;font-size:12px;color:#0000b0;letter-spacing:-0.16px;left:11.4px;">ИТОГО: <span class="d" style="letter-spacing:-0.86px">107 455.00</span> Руб, в т.ч. НДС <span class="d" style="letter-spacing:-0.86px">20</span>% - <span class="d" style="letter-spacing:-0.86px">17 909.16</span> Руб</div>
<div style="left:17px;top:574px;width:73px;height:23px;background:#e1e1e1;border:2px solid #0078d7;box-sizing:border-box;"></div>
<div class="t" style="top:578px;font-size:12px;color:#000;letter-spacing:-0.44px;left:-47.02px;width:200px;text-align:center;">OK</div>
<div style="left:97px;top:574px;width:73px;height:23px;background:#e1e1e1;border:1px solid #adadad;box-sizing:border-box;"></div>
<div class="t" style="top:578px;font-size:12px;color:#000;letter-spacing:-0.35px;left:32.83px;width:200px;text-align:center;">Отмена</div>
<div style="left:179px;top:574px;width:65px;height:23px;background:#e1e1e1;border:1px solid #adadad;box-sizing:border-box;"></div>
<div class="i" style="left:184.9px;top:576.8px"><svg width="17" height="17" viewBox="0 0 17 17"><circle cx="8.5" cy="8.5" r="8.2" fill="#1f7ad4"/><path d="M8.6 5.8v8.6" stroke="#fff" stroke-width="2.4"/><rect x="7.4" y="2.6" width="2.4" height="2" fill="#e8f6ff"/></svg></div>
<div class="t" style="top:578px;font-size:12px;color:#000;letter-spacing:-0.2px;left:205.5px;">Инфо</div>
<div style="left:252px;top:574px;width:78px;height:23px;background:#e1e1e1;border:1px solid #adadad;box-sizing:border-box;"></div>
<div class="i" style="left:260.5px;top:577px"><svg width="17" height="16" viewBox="0 0 17 17" preserveAspectRatio="none"><path d="M2.8 0.8h11v7h-11z" fill="#fff" stroke="#8a9398" stroke-width="1"/><path d="M1.8 6.5h13q1.2 0 1.2 1.2v4.6q0 1.2-1.2 1.2h-13q-1.2 0-1.2-1.2v-4.6q0-1.2 1.2-1.2z" fill="#b9c9d0" stroke="#7d8a90" stroke-width="1"/><path d="M2.8 11.5h11v4.3h-11z" fill="#fff" stroke="#8a9398" stroke-width="1"/></svg></div>
<div class="t" style="top:578px;font-size:12px;color:#000;letter-spacing:-0.28px;left:281.7px;">Печать</div>
<div style="left:451px;top:573px;width:168px;height:23px;background:#e1e1e1;border:1px solid #adadad;box-sizing:border-box;"></div>
<div class="t" style="top:577px;font-size:12px;color:#000;left:455.4px;">Добавить по штрих коду</div>
<svg class="i" style="left:604px;top:580px" width="12" height="10" viewBox="0 0 12 10"><path d="M2 3l4 4l4-4" stroke="#444" stroke-width="1" fill="none"/></svg>
<div style="left:621px;top:573px;width:150px;height:23px;background:#fff;border:1px solid #0078d7;box-sizing:border-box;"></div>
<div style="left:624px;top:576px;width:1px;height:15px;background:#000;"></div>
<svg class="i" style="left:0;top:0" width="916" height="608" viewBox="0 0 916 608"><path d="M232.4 100.2L235.5 96.39999999999999L238.6 100.2" stroke="#bfbfbf" stroke-width="2.3" fill="none"/><path d="M232.4 283.90000000000003L235.5 287.7L238.6 283.90000000000003" stroke="#bfbfbf" stroke-width="2.3" fill="none"/><path d="M14.1 299.29999999999995L10.299999999999999 302.4L14.1 305.5" stroke="#bfbfbf" stroke-width="2.3" fill="none"/><path d="M217.0 299.29999999999995L220.8 302.4L217.0 305.5" stroke="#bfbfbf" stroke-width="2.3" fill="none"/><path d="M900.4 99.9L903.5 96.1L906.6 99.9" stroke="#585858" stroke-width="2.3" fill="none"/><path d="M900.4 284.1L903.5 287.9L906.6 284.1" stroke="#585858" stroke-width="2.3" fill="none"/><path d="M265.2 299.4L261.40000000000003 302.5L265.2 305.6" stroke="#585858" stroke-width="2.3" fill="none"/><path d="M884.8000000000001 299.4L888.6 302.5L884.8000000000001 305.6" stroke="#585858" stroke-width="2.3" fill="none"/><path d="M896.4 384.4L899.5 380.6L902.6 384.4" stroke="#585858" stroke-width="2.3" fill="none"/><path d="M896.4 508.6L899.5 512.4L902.6 508.6" stroke="#585858" stroke-width="2.3" fill="none"/><path d="M20.4 524.9L16.6 528L20.4 531.1" stroke="#bfbfbf" stroke-width="2.3" fill="none"/><path d="M880.6 524.4L884.4 527.5L880.6 530.6" stroke="#bfbfbf" stroke-width="2.3" fill="none"/></svg>
</div></body></html>
